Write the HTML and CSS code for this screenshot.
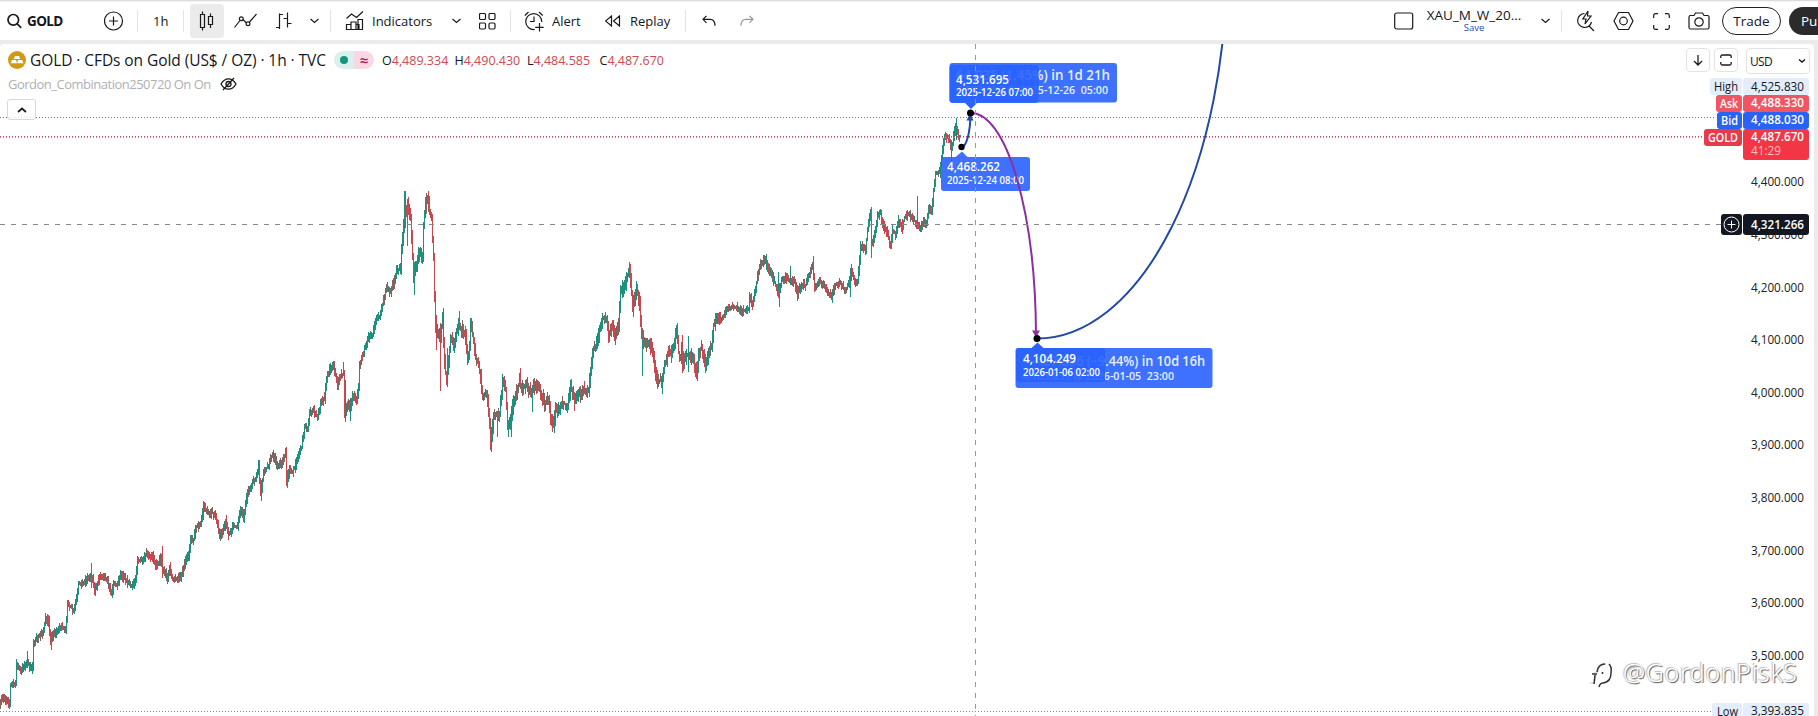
FILE: index.html
```html
<!DOCTYPE html>
<html lang="en">
<head>
  <meta charset="UTF-8" />
  <meta name="viewport" content="width=device-width, initial-scale=1" />
  <title>GOLD 4,487.670</title>
  <link rel="stylesheet" href="styles.css">
</head>
<body>

<!-- Top toolbar -->
<header class="toolbar">
  <svg class="icon" width="15" height="16" viewBox="0 0 15 16"><circle cx="6.3" cy="6.8" r="5.3" stroke-width="1.7"/><path d="M10.2 10.8l4 4" stroke-width="1.7"/></svg>
  <span class="symbol">GOLD</span>
  <svg class="icon" width="20" height="20" viewBox="0 0 20 20"><circle cx="9.5" cy="10" r="9"/><path d="M9.5 5.5v9M5 10h9"/></svg>
  <i class="sep"></i>
  <span class="label interval">1h</span>
  <i class="sep"></i>
  <button class="tool active"><svg class="icon" width="16" height="20" viewBox="0 0 16 20"><path d="M1.5 3.5h4v13h-4zM3.5 0.5v3M3.5 16.5v3M9.500 5.500h4v8h-4zM11.500 2.500v3M11.500 13.500v3.500"/></svg></button>
  <svg class="icon" width="23" height="16" viewBox="0 0 23 16"><path d="M.5 14.500l5.500-7M8.800 6.500l3.800 3.500M15.500 9l7-8"/><circle cx="7.300" cy="5.800" r="1.900"/><circle cx="14" cy="10.800" r="1.900"/></svg>
  <svg class="icon" width="16" height="18" viewBox="0 0 16 18"><path d="M0 15.500h3.500M3.500 17V1.500M3.500 2.500h3.500M7.500 6.500h3.500M11.500 0.500v15M11.500 11.500h4"/></svg>
  <svg class="icon chev" width="9" height="6" viewBox="0 0 9 6"><path d="M.5 1l4 3.500 4-3.500"/></svg>
  <i class="sep"></i>
  <svg class="icon" width="20" height="20" viewBox="0 0 20 20"><path d="M1.500 7.500l5-4.500 5 3.500 6.500-6M1.500 19v-5.500h4.500v5.500M6 19v-8h5v8M11 13.500h3v5.500M13 19v-10.500h4.500v10.500M1 18.500h17"/></svg>
  <span class="label indicators">Indicators</span>
  <svg class="icon chev" width="9" height="6" viewBox="0 0 9 6"><path d="M.5 1l4 3.500 4-3.500"/></svg>
  <svg class="icon" width="17" height="17" viewBox="0 0 17 17"><rect x=".5" y=".5" width="6" height="6" rx="1.200"/><rect x="10" y=".5" width="6" height="6" rx="1.200"/><rect x=".5" y="10" width="6" height="6" rx="1.200"/><rect x="10" y="10" width="6" height="6" rx="1.200"/></svg>
  <i class="sep"></i>
  <svg class="icon" width="21" height="21" viewBox="0 0 21 21"><path d="M17.700 11a8 8 0 1 0-7 7.500M10 5.500v5h-4M0.800 4.500l3.700-3.500M15 1l3.700 3.500M15.500 12v8.500M11.200 16.300h8.500"/></svg>
  <span class="label alert">Alert</span>
  <svg class="icon" width="16" height="12" viewBox="0 0 16 12"><path d="M6.500 1v10l-6-5zM14.500 1v10l-6-5z"/></svg>
  <span class="label replay">Replay</span>
  <i class="sep"></i>
  <svg class="icon" width="14" height="12" viewBox="0 0 14 12"><path d="M4.500.8L1 4.300l3.500 3.500M1 4.300h7q5 0 5 6.500"/></svg>
  <svg class="icon faded" width="14" height="12" viewBox="0 0 14 12"><path d="M9.500.8L13 4.300l-3.500 3.500M13 4.300h-7q-5 0-5 6.500"/></svg>

  <svg class="icon" width="20" height="18" viewBox="0 0 20 18"><rect x=".7" y="1" width="18" height="16" rx="2"/></svg>
  <div class="layout-name"><span class="layout-title">XAU_M_W_20...</span><span class="save">Save</span></div>
  <svg class="icon chev" width="9" height="6" viewBox="0 0 9 6"><path d="M.5 1l4 3.500 4-3.500"/></svg>
  <i class="sep"></i>
  <svg class="icon" width="19" height="22" viewBox="0 0 19 22"><path d="M8.500 3.500a7 7 0 1 0 7 8.500M13 16l5 5M12 1L6.800 9H10l-1 5 6-8h-3.500z"/></svg>
  <svg class="icon" width="21" height="20" viewBox="0 0 21 20"><path d="M5.500 1.500h10l4.500 8.500-4.500 8.500h-10L1 10z"/><circle cx="10.500" cy="10" r="3.800"/></svg>
  <svg class="icon" width="17" height="17" viewBox="0 0 17 17"><path d="M.7 5V2.500q0-1.800 1.800-1.800H5M12 .7h2.500q1.800 0 1.800 1.800V5M16.300 12v2.500q0 1.800-1.800 1.800H12M5 16.300H2.500q-1.800 0-1.800-1.800V12"/></svg>
  <svg class="icon" width="22" height="18" viewBox="0 0 22 18"><path d="M2.500 3.500H6L7.500 1h7L16 3.500h3.500q1.500 0 1.500 1.500v10.500q0 1.500-1.500 1.500h-17q-1.500 0-1.500-1.500V5q0-1.500 1.500-1.500z"/><circle cx="11" cy="10" r="4.200"/></svg>
  <button class="trade">Trade</button>
  <button class="publish">Publish</button>
</header>

<!-- Chart pane -->
<main class="chart">
  <svg id="plot" width="1814" height="672" viewBox="0 44 1814 672"></svg>

  <section class="legend">
    <div class="legend-row">
      <svg class="logo" width="18" height="18" viewBox="0 0 18 18"><circle cx="9" cy="9" r="9" fill="#d19a10"/><path d="M7 5h4l1.200 3H5.800zM4 9h4l1 3.200H2.500zM10 9h4l1.500 3.200H9.200z" fill="#fff"/></svg>
      <h1>GOLD · CFDs on Gold (US$ / OZ) · 1h · TVC</h1>
      <span class="status"><i class="open"><b></b></i><i class="approx">≈</i></span>
      <span class="ohlc">O<em>4,489.334</em></span>
      <span class="ohlc">H<em>4,490.430</em></span>
      <span class="ohlc">L<em>4,484.585</em></span>
      <span class="ohlc">C<em>4,487.670</em></span>
    </div>
    <div class="legend-row study">
      <span>Gordon_Combination250720 On On</span>
      <svg class="icon" width="17" height="14" viewBox="0 0 17 14"><path d="M1 7q3-5.200 7.500-5.200T16 7q-3 5.200-7.500 5.200T1 7zM3 13L14 1" stroke-width="1.300"/><circle cx="8.500" cy="7" r="2.500" stroke-width="1.300"/></svg>
    </div>
    <button class="collapse"><svg class="icon" width="10" height="6" viewBox="0 0 10 6"><path d="M1 5l4-3.500L9 5" stroke-width="1.700"/></svg></button>
  </section>

  <section class="scale-tools">
    <button><svg class="icon" width="10" height="12" viewBox="0 0 10 12"><path d="M5 1v10M1 7l4 4 4-4" stroke-width="1.300"/></svg></button>
    <button><svg class="icon" width="12" height="12" viewBox="0 0 12 12"><path d="M.8 4V2.500Q.8 1 2.300 1h7.400q1.500 0 1.500 1.500V4M.8 8v1.500Q.8 11 2.300 11h7.400q1.500 0 1.500-1.500V8" stroke-width="1.300"/></svg></button>
    <button class="currency"><span>USD</span><svg class="icon" width="8" height="6" viewBox="0 0 8 6"><path d="M1 1.500l3 2.500 3-2.500" stroke-width="1.500"/></svg></button>
  </section>
</main>

<script src="chart.js"></script>
</body>
</html>
```
FILE: styles.css
```css
body {
  margin: 0;
  height: 716px;
  overflow: hidden;
  background: #ebebeb;
  font-family: "Open Sans", sans-serif;
  color: #131722;
}
button {
  padding: 0;
  font: inherit;
  color: inherit;
  background: #fff;
  border: none;
}
.icon {
  display: block;
  fill: none;
  stroke: #1a1a1a;
  stroke-width: 1.2;
}
.faded {
  opacity: 0.45;
}

/* toolbar */
.toolbar {
  box-sizing: border-box;
  height: 40px;
  padding: 1px 0 0 7px;
  border-top: 1px solid #dcdcdc;
  box-shadow: inset 0 1px #f4f4f4;
  background: #fff;
  overflow: hidden;
  display: grid;
  align-items: center;
  grid-template-rows: 38px;
  grid-template-columns:
    20px 77px 33px 16px 30px 7px 44px 42px 34px 20px 15px
    27px 80px 27px 31px 14px 28px 53px 25px 55px 17px 38px 654px
    33px 114px 20px 15px 37px 40px 35px 34px 67px 80px;
}
.symbol {
  font-size: 13.500px;
  font-weight: 700;
  letter-spacing: -0.6px;
}
.label {
  font-size: 13px;
  font-weight: 500;
  letter-spacing: 0;
  white-space: nowrap;
}
.sep {
  width: 1px;
  height: 22px;
  background: #e3e3e3;
}
.tool {
  width: 34px;
  height: 34px;
  border-radius: 4px;
  display: flex;
  align-items: center;
  justify-content: center;
}
.tool.active {
  background: #ebebeb;
}
.layout-name {
  width: 94px;
  display: flex;
  flex-direction: column;
  align-items: center;
}
.layout-title {
  font-size: 13.500px;
  line-height: 13px;
}
.save {
  font-size: 9.500px;
  line-height: 11px;
  color: #2450b8;
}
.trade,
.publish {
  box-sizing: border-box;
  height: 28px;
  border-radius: 14px;
  font-size: 13.500px;
  font-weight: 500;
}
.trade {
  width: 59px;
  border: 1px solid #222;
}
.publish {
  width: 80px;
  padding-left: 12px;
  text-align: left;
  background: #2b2b2b;
  color: #fff;
}

/* chart */
.chart {
  position: relative;
  width: 1814px;
  height: 672px;
  margin-top: 4px;
  background: #fff;
  border-radius: 4px 4px 0 0;
  overflow: hidden;
}
#plot {
  display: block;
}
.legend {
  position: absolute;
  left: 7px;
  top: 6px;
}
.legend-row {
  display: flex;
  align-items: center;
  height: 20px;
}
.logo {
  margin: 0 4px 0 1px;
}
h1 {
  margin: 0;
  width: 304px;
  font-size: 15.500px;
  font-weight: 400;
  letter-spacing: -0.07px;
  white-space: nowrap;
}
.status {
  display: flex;
  width: 40px;
  height: 18px;
  margin-right: 8px;
  border-radius: 9px;
  overflow: hidden;
}
.status i {
  flex: 1;
  display: flex;
  align-items: center;
  justify-content: center;
  font-style: normal;
}
.open {
  background: #d9f0ec;
}
.open b {
  width: 8px;
  height: 8px;
  border-radius: 50%;
  background: #12967e;
}
.approx {
  background: #fad7e5;
  color: #9c1d5a;
  font-size: 15px;
  font-weight: 600;
}
.ohlc {
  width: 72.500px;
  font-size: 12.500px;
  white-space: nowrap;
}
.ohlc em {
  font-style: normal;
  color: #cc4a52;
}
.study {
  height: 28px;
  font-size: 13px;
  letter-spacing: -0.5px;
  color: #b0b0b0;
}
.study span {
  width: 212px;
  padding-left: 1px;
  white-space: nowrap;
}
.collapse {
  box-sizing: border-box;
  width: 29px;
  height: 21px;
  margin-top: 1px;
  border: 1px solid #d8d8d8;
  border-radius: 3px;
  background: rgba(255, 255, 255, 0.8);
  display: flex;
  align-items: center;
  justify-content: center;
}
.scale-tools {
  position: absolute;
  right: 4px;
  top: 4px;
  display: flex;
  gap: 4px;
}
.scale-tools button {
  box-sizing: border-box;
  width: 24px;
  height: 24px;
  border: 1px solid #e2e2e2;
  border-radius: 4px;
  display: flex;
  align-items: center;
  justify-content: center;
}
.scale-tools .currency {
  width: 64px;
  height: 26px;
  margin-left: 4px;
  padding: 0 3px;
  justify-content: space-between;
  font-size: 12px;
  letter-spacing: -0.7px;
}

/* plot */
.watermark {
  font-family: "Noto Sans", sans-serif;
  font-weight: 300;
  fill: #fff;
  text-shadow: 1px 1px 1px #555, -1px -1px 1px #bbb;
}
.watermark-icon {
  fill: none;
  stroke: #333;
  stroke-width: 1.5;
}
.watermark-icon.shine {
  stroke: #ddd;
}
```
FILE: chart.js
```js
const plot = document.getElementById("plot");
const UP = "#1f8f7d";
const DOWN = "#c94850";
const MIXED = "#806660";

function add(tag, attrs, content) {
  const node = document.createElementNS("http://www.w3.org/2000/svg", tag);
  for (const key in attrs) node.setAttribute(key, attrs[key]);
  if (content) node.textContent = content;
  plot.appendChild(node);
  return node;
}

function line(x1, y1, x2, y2, stroke, dash) {
  add("line", { x1, y1, x2, y2, stroke, "stroke-dasharray": dash });
}

function box(x, y, width, height, fill, opacity = 1) {
  add("rect", { x, y, width, height, fill, rx: 3, "fill-opacity": opacity });
}

// text squeezed to a given width
function text(x, y, width, size, fill, content, weight = 400) {
  add("text", { x, y, fill, "font-size": size, "font-weight": weight, textLength: width, lengthAdjust: "spacingAndGlyphs", style: "white-space:pre" }, content);
}

// price path: x, y
const path = [
  0,704, 2,697, 5,700, 10,704, 11,686, 14,683, 16,685, 17,665, 21,670, 25,667, 28,660, 31,669, 33,667, 34,645, 36,638, 40,636, 43,634, 46,618, 49,622, 51,640,
  54,634, 58,630, 62,627, 66,629, 68,606, 71,606, 74,611, 77,597, 79,583, 83,585, 88,578, 91,577, 93,580, 95,590, 100,577, 104,578, 108,582, 112,594, 114,585,
  118,585, 121,575, 127,580, 131,586, 136,581, 138,561, 142,560, 147,552, 150,556, 153,557, 157,567, 161,558, 163,570, 165,571, 168,580, 170,567, 173,580, 177,579,
  182,576, 186,560, 189,556, 191,540, 194,539, 197,527, 201,524, 204,505, 208,513, 213,513, 216,515, 219,530, 221,537, 224,530, 226,521, 229,535, 233,527, 238,526,
  241,510, 244,518, 248,492, 252,484, 256,480, 259,465, 261,495, 264,473, 269,465, 273,454, 278,466, 283,462, 286,452, 287,483, 290,470, 293,472, 297,463, 299,454,
  302,447, 305,428, 308,428, 310,413, 314,410, 318,418, 321,405, 325,398, 327,378, 330,370, 334,366, 338,385, 341,375, 344,374, 345,415, 348,402, 351,410, 353,394,
  357,400, 359,388, 360,365, 363,356, 366,345, 369,337, 373,335, 377,318, 380,317, 384,300, 387,288, 391,292, 395,280, 397,270, 401,268, 402,250, 404,225, 405,198,
  407,215, 408,205, 411,218, 413,258, 414,278, 417,265, 419,255, 423,256, 424,225, 426,206, 428,198, 430,210, 432,217, 434,260, 435,295, 436,330, 438,335, 441,335,
  443,320, 445,362, 447,383, 449,360, 451,338, 454,345, 457,330, 460,325, 463,330, 466,338, 468,362, 470,345, 471,325, 473,333, 476,357, 479,365, 481,377, 483,397,
  487,393, 489,410, 491,443, 494,418, 498,413, 500,413, 502,395, 503,380, 506,390, 508,428, 510,425, 513,408, 516,395, 520,380, 522,388, 527,385, 531,392, 536,385,
  540,390, 545,403, 549,398, 551,420, 554,426, 556,411, 560,410, 564,403, 568,407, 571,387, 575,402, 580,395, 584,390, 589,391, 591,372, 593,350, 596,348, 599,335,
  603,318, 607,320, 609,335, 612,325, 615,336, 619,325, 621,288, 624,290, 626,283, 629,270, 631,280, 633,305, 635,300, 637,286, 640,303, 642,335, 645,345, 650,343,
  654,358, 657,383, 661,380, 662,386, 665,365, 669,352, 672,355, 675,340, 677,333, 679,353, 681,358, 682,345, 684,363, 687,355, 690,358, 693,355, 697,373, 699,355,
  702,347, 706,368, 709,355, 712,345, 714,325, 718,315, 721,322, 724,315, 728,308, 732,307, 737,307, 741,312, 746,310, 749,308, 750,295, 753,305, 756,290, 758,275,
  761,265, 766,258, 768,267, 771,272, 775,283, 779,293, 782,280, 786,277, 790,280, 795,283, 798,293, 802,285, 806,285, 809,275, 813,268, 815,287, 820,281, 825,285,
  828,293, 832,295, 836,285, 841,283, 846,291, 850,280, 852,270, 855,283, 858,280, 860,260, 861,245, 866,250, 868,230, 871,212, 872,245, 875,235, 878,215, 881,213,
  883,225, 887,232, 891,246, 893,230, 896,235, 899,220, 902,228, 905,217, 909,214, 914,220, 917,224, 921,228, 924,223, 927,222, 929,207, 932,214, 934,190, 936,173,
  940,172, 943,150, 945,135, 949,138, 952,150, 955,130, 957,128, 959,138, 961,136
];

// long wicks: x, high, low, colour
const wicks = [
  [27, 651, 668, UP], [47, 614, 624, DOWN], [51, 632, 650, DOWN], [91, 563, 588, DOWN], [113, 584, 595, DOWN], [162, 546, 578, DOWN], [203, 502, 520, UP], [220, 530, 540, UP],
  [259, 460, 472, DOWN], [261, 480, 501, UP], [286, 447, 485, DOWN], [287, 470, 488, DOWN], [343, 362, 376, DOWN], [345, 380, 422, UP], [350, 398, 421, UP], [405, 193, 228, UP],
  [407, 200, 246, DOWN], [414, 262, 295, UP], [428, 192, 205, DOWN], [436, 315, 350, DOWN], [440, 323, 391, DOWN], [443, 308, 335, UP], [447, 348, 387, UP], [459, 311, 325, DOWN],
  [491, 428, 452, UP], [497, 413, 437, DOWN], [504, 377, 387, DOWN], [508, 420, 437, UP], [511, 410, 437, UP], [520, 368, 385, DOWN], [532, 390, 412, UP], [630, 264, 275, DOWN],
  [633, 295, 317, UP], [642, 340, 376, UP], [657, 370, 389, DOWN], [662, 380, 394, UP], [677, 323, 340, DOWN], [682, 335, 373, DOWN], [688, 336, 372, UP], [697, 370, 381, UP],
  [766, 254, 270, UP], [778, 272, 292, UP], [779, 290, 307, UP], [790, 266, 285, UP], [797, 286, 301, DOWN], [813, 256, 275, UP], [832, 290, 303, UP], [850, 268, 297, UP],
  [871, 207, 225, DOWN], [871, 230, 258, DOWN], [917, 196, 222, UP], [951, 140, 165, UP], [956, 118, 140, UP]
];

// fixed seed keeps the bars identical on every load
let seed = 7;
function rand() {
  seed = (seed * 16807) % 2147483647;
  return seed / 2147483647;
}

function drawBars() {
  for (let i = 0; i + 3 < path.length; i += 2) {
    const [x1, y1, x2, y2] = path.slice(i, i + 4);
    const slope = (y2 - y1) / (x2 - x1);
    // swings get wider after the first top
    const swing = x1 > 400 && x1 < 720 ? 8 : 5;
    for (let x = x1; x < x2; x++) {
      const y = y1 + slope * (x - x1);
      const top = Math.min(y, y + slope) - 1 - rand() * swing;
      const bottom = Math.max(y, y + slope) + 1 + rand() * swing;
      const trend = slope < 0 ? UP : DOWN;
      const r = rand();
      let fill = r < 0.45 ? MIXED : r < 0.55 ? (slope < 0 ? DOWN : UP) : trend;
      if (Math.abs(slope) > 4) fill = trend;
      add("rect", { x, y: Math.round(top), width: 1, height: Math.round(bottom - top), fill });
    }
  }
  wicks.forEach(([x, high, low, fill]) => add("rect", { x, y: high, width: 1, height: low - high, fill }));
}

function drawPriceScale() {
  for (let i = 0; i <= 10; i++) {
    const price = (4.4 - i * 0.1).toFixed(1).replace(".", ",") + "00.000";
    text(1751, 186.300 + i * 52.600, 53, 12.500, "#222", price);
  }
  box(1710, 78, 32, 17, "#e3edfb");
  box(1743, 78, 66, 17, "#e3edfb");
  text(1714, 90.500, 24, 12.500, "#131722", "High");
  text(1751, 90.500, 53, 12.500, "#131722", "4,525.830");
  box(1716, 95, 26, 17, "#ef5662");
  box(1743, 95, 66, 17, "#ef5662");
  text(1720, 108, 18, 12.500, "#fff", "Ask", 600);
  text(1751, 107, 53, 12.500, "#fff", "4,488.330", 600);
  box(1717, 112, 25, 17, "#2962f5");
  box(1743, 112, 66, 17, "#2962f5");
  text(1721, 125, 17, 12.500, "#fff", "Bid", 600);
  text(1751, 124, 53, 12.500, "#fff", "4,488.030", 600);
  box(1704, 129, 38, 17, "#e53b4b");
  box(1743, 129, 66, 31, "#f23645");
  text(1708, 142, 30, 12.500, "#fff", "GOLD", 600);
  text(1751, 141, 53, 12.500, "#fff", "4,487.670", 600);
  text(1751, 155, 30, 12.500, "#fbc3c7", "41:29");
  box(1721, 214, 21, 21, "#131722");
  box(1743, 214, 66, 21, "#131722");
  add("circle", { cx: 1731.500, cy: 224.500, r: 7.500, fill: "none", stroke: "#fff" });
  add("path", { d: "M1731.500 220.500v8M1727.500 224.500h8", stroke: "#fff" });
  text(1751, 228.500, 53, 12.500, "#fff", "4,321.266", 600);
  box(1712, 703, 30, 17, "#e3edfb");
  box(1743, 703, 66, 17, "#e3edfb");
  text(1717, 716, 21, 12.500, "#131722", "Low");
  text(1751, 715, 53, 12.500, "#131722", "3,393.835");
}

function drawCallouts() {
  // move up
  box(949.500, 63, 167.500, 39.500, "#2962ff", 0.9);
  text(956, 80, 154, 13.500, "#e8efff", "64.935 (1.45%) in 1d 21h", 600);
  text(956, 94, 152, 11, "#e8efff", "4,533.197 @ 2025-12-26  05:00", 600);
  box(949.500, 65, 89, 38, "#2962ff", 0.9);
  add("path", { d: "M965 103h12l-6 6z", fill: "#2962ff" });
  text(956, 84, 53, 12.500, "#fff", "4,531.695", 600);
  text(956, 96, 77, 10.500, "#fff", "2025-12-26 07:00", 600);

  // start point
  box(941, 157, 89, 34, "#2962ff", 0.9);
  add("path", { d: "M955 157.500h13l-6-6z", fill: "#2962ff", "fill-opacity": 0.9 });
  text(947, 171, 53, 12.500, "#fff", "4,468.262", 600);
  text(947, 184, 77, 10.500, "#fff", "2025-12-24 08:00", 600);

  // move down
  box(1015.500, 348, 197, 40, "#2962ff", 0.9);
  text(1029, 365.500, 176, 13.500, "#e8efff", "−427.856 (−9.44%) in 10d 16h", 600);
  text(1022, 380, 152, 11, "#e8efff", "4,103.839 @ 2026-01-05  23:00", 600);
  box(1016, 348, 89, 34, "#2962ff", 0.9);
  add("path", { d: "M1031 348.500h13l-6.500-6z", fill: "#2962ff" });
  text(1023, 362.500, 53, 12.500, "#fff", "4,104.249", 600);
  text(1023, 375.500, 77, 10.500, "#fff", "2026-01-06 02:00", 600);
}

function drawProjection() {
  const curve = (d, stroke) => add("path", { d, stroke, fill: "none", "stroke-width": 2 });
  curve("M1037 338.500A190 378 0 0 0 1227 -39.500", "#2149a5");
  curve("M971 113A65 225 0 0 1 1036 336", "#8c2f9f");
  curve("M962 147A9 34 0 0 0 970.500 114", "#2149a5");
  add("path", { d: "M966.500 120.500h7l-3.500-7z", fill: "#2149a5" });
  add("path", { d: "M1032 330.500h8l-4 7z", fill: "#8c2f9f" });
  add("circle", { cx: 970.500, cy: 113, r: 3.500 });
  add("circle", { cx: 961.500, cy: 147, r: 3.200 });
  add("circle", { cx: 1037, cy: 338.500, r: 3.500 });
}

line(0, 117.500, 1716, 117.500, "#777", "1 2");
line(0, 711.500, 1712, 711.500, "#888", "1 2");
drawBars();
line(0, 136.500, 1704, 136.500, "#c2495a", "1 2");
line(0, 137.500, 1704, 137.500, "#d98a93", "1 2");
drawCallouts();
drawProjection();
line(0, 224.500, 1721, 224.500, "#888", "5 6");
line(975.500, 44, 975.500, 716, "#999", "5 6");
drawPriceScale();

add("text", { x: 1623, y: 682, "font-size": 25, textLength: 174, class: "watermark" }, "@GordonPiskS");
add("path", { d: "M1590 683q4 1 5-3l1-7M1593 673h4q2-9 9-9", class: "watermark-icon shine" });
add("path", { d: "M1592 674h5M1597 672q1-8 8-8M1609 664q3 3 2 9 0 9-8 10-3 0-4 4M1595 675l-1 9M1602.500 672v2", class: "watermark-icon" });
```
